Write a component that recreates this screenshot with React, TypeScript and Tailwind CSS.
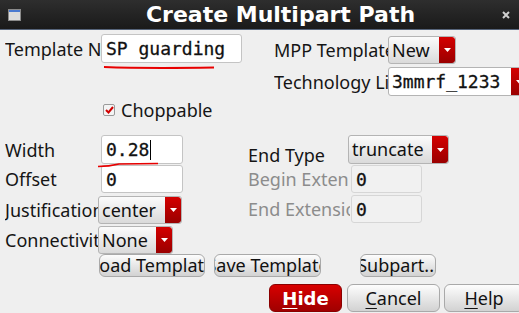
import React from 'react';

const sans = "font-['Noto_Sans','DejaVu_Sans',sans-serif]";
const mono = "font-['DejaVu_Sans_Mono','Liberation_Mono',monospace]";

const Arrow: React.FC = () => (
	<div className="flex h-full w-[16px] shrink-0 items-center justify-center rounded-r-[3px] bg-gradient-to-b from-[#d40000] to-[#9a0000]">
		<svg width="7" height="4" viewBox="0 0 7 4">
			<path d="M0 0 H7 L3.5 4 Z" fill="#fff" />
		</svg>
	</div>
);

const Dropdown: React.FC<{
	value: string;
	className: string;
	monoText?: boolean;
	white?: boolean;
}> = ({ value, className, monoText, white }) => (
	<div
		className={`flex shrink-0 overflow-hidden rounded-[3px] border border-[#b4b4b4] ${
			white ? 'bg-white' : 'bg-gradient-to-b from-[#fbfbfb] to-[#dadada]'
		} ${className}`}
	>
		<div
			className={`flex flex-1 items-center overflow-hidden whitespace-nowrap pl-[3px] text-[18px] text-[#111] ${
				monoText ? `${mono} [-webkit-text-stroke:0.3px_#111]` : sans
			}`}
		>
			{value}
		</div>
		<Arrow />
	</div>
);

const Field: React.FC<{ value: string; className: string; disabled?: boolean; cursor?: boolean }> = ({
	value,
	className,
	disabled,
	cursor,
}) => (
	<div
		className={`flex shrink-0 items-center rounded-[3px] border ${
			disabled ? 'border-[#d6d6d6] bg-[#f1f1f1]' : 'border-[#c4c4c4] bg-white'
		} pl-[4px] ${mono} text-[18px] text-[#111] [-webkit-text-stroke:0.3px_#111] ${className}`}
	>
		{value}
		{cursor && <span className="ml-[1px] inline-block h-[20px] w-[1px] bg-black" />}
	</div>
);

const Button: React.FC<{ className: string; children: React.ReactNode }> = ({ className, children }) => (
	<div
		className={`flex shrink-0 items-center justify-center overflow-hidden whitespace-nowrap rounded-[6px] border border-[#a9a9a9] bg-gradient-to-b from-[#fdfdfd] to-[#d2d2d2] ${sans} text-[18px] text-[#111] ${className}`}
	>
		{children}
	</div>
);

const Label: React.FC<{ text: string; className: string; gray?: boolean }> = ({ text, className, gray }) => (
	<div
		className={`shrink-0 overflow-hidden whitespace-nowrap ${sans} text-[18px] leading-[22px] ${
			gray ? 'text-[#8c8c8c]' : 'text-[#151515]'
		} ${className}`}
	>
		{text}
	</div>
);

export default function App() {
	return (
		<div className={`h-[313px] w-[519px] overflow-hidden bg-[#efefef] ${sans}`}>
			{/* title bar */}
			<div className="flex h-[30px] items-center border-b border-[#56647a] bg-gradient-to-b from-[#2e2e2e] to-[#1a1a1a]">
				<div className="ml-[8px] flex h-[12px] w-[13px] flex-col border border-[#8a8a8a] bg-[#dcdcdc]">
					<div className="h-[2px] bg-[#4a7ad0]" />
				</div>
				<div className="flex-1 pl-[38px] text-center font-['DejaVu_Sans',sans-serif] text-[22px] font-bold leading-[28px] text-white">
					Create Multipart Path
				</div>
				<svg className="mr-[9px]" width="8" height="8" viewBox="0 0 8 8">
					<path d="M1 1 L7 7 M7 1 L1 7" stroke="#d0d0d0" strokeWidth="2" />
				</svg>
			</div>

			{/* top section */}
			<div className="flex h-[105px]">
				<div className="w-[274px] shrink-0 pl-[5px]">
					<div className="mt-[4px] flex items-center">
						<Label text="Template Name" className="w-[96px]" />
						<Field value="SP guarding" className="h-[29px] w-[141px]" />
					</div>
					<svg className="ml-[98px] mt-[2px]" width="112" height="5" viewBox="0 0 112 5">
						<path d="M1 2 Q40 3.5 111 2.5" stroke="#e80000" strokeWidth="2" fill="none" />
					</svg>
					<div className="ml-[98px] mt-[28px] flex items-center">
						<div className="flex h-[12px] w-[12px] items-center justify-center rounded-[2px] border border-[#9a9a9a] bg-[#f4f4f4]">
							<svg width="9" height="8" viewBox="0 0 9 8">
								<path d="M1 4 L3.5 6.5 L8 1" stroke="#d00000" strokeWidth="2" fill="none" />
							</svg>
						</div>
						<Label text="Choppable" className="ml-[6px] leading-[24px]" />
					</div>
				</div>
				<div className="min-w-0 flex-1">
					<div className="mt-[6px] flex items-center">
						<Label text="MPP Template" className="w-[114px]" />
						<Dropdown value="New" className="h-[28px] w-[68px]" />
					</div>
					<div className="mt-[3px] flex items-center">
						<Label text="Technology Library" className="w-[114px]" />
						<Dropdown value="3mmrf_1233" monoText white className="h-[29px] w-[140px]" />
					</div>
				</div>
			</div>

			{/* middle rows */}
			<div className="pl-[5px]">
				<div className="flex h-[30px] items-start">
					<Label text="Width" className="mt-[4px] w-[96px]" />
					<div className="relative">
						<Field value="0.28" cursor className="h-[29px] w-[82px]" />
						<svg className="absolute left-[-4px] top-[27px]" width="62" height="6" viewBox="0 0 62 6">
							<path d="M1 4.5 Q12 4.5 22 2 L61 1.5" stroke="#e80000" strokeWidth="1.6" fill="none" />
						</svg>
					</div>
					<Label text="End Type" className="ml-[65px] mt-[9px] w-[100px]" />
					<Dropdown value="truncate" className="h-[29px] w-[101px]" />
				</div>
				<div className="flex h-[30px] items-start">
					<Label text="Offset" className="mt-[3px] w-[96px]" />
					<Field value="0" className="h-[28px] w-[82px]" />
					<Label text="Begin Extension" gray className="ml-[65px] mt-[3px] w-[101px]" />
					<Field value="0" disabled className="ml-[2px] h-[28px] w-[71px]" />
				</div>
				<div className="flex h-[31px] items-start">
					<Label text="Justification" className="mt-[4px] w-[93px]" />
					<Dropdown value="center" className="mt-[1px] h-[28px] w-[84px]" />
					<Label text="End Extension" gray className="ml-[66px] mt-[3px] w-[102px]" />
					<Field value="0" disabled className="ml-[1px] h-[28px] w-[71px]" />
				</div>
				<div className="flex h-[28px] items-start">
					<Label text="Connectivity" className="mt-[3px] w-[93px]" />
					<Dropdown value="None" className="h-[28px] w-[75px]" />
				</div>
			</div>

			{/* template buttons */}
			<div className="flex h-[23px] pl-[99px]">
				<Button className="h-[23px] w-[106px] text-[17px]">Load Template</Button>
				<Button className="ml-[9px] h-[23px] w-[107px] text-[17px]">Save Template</Button>
				<Button className="ml-[39px] h-[23px] w-[76px] text-[17px]">Subpart...</Button>
			</div>

			{/* bottom buttons */}
			<div className="mt-[7px] flex h-[28px] pl-[269px]">
				<div className="flex h-[28px] w-[73px] shrink-0 items-center justify-center rounded-[6px] border border-[#8a0000] bg-gradient-to-b from-[#d80000] to-[#a00000] font-['DejaVu_Sans',sans-serif] text-[18px] font-bold text-white">
					<span className="underline decoration-1 underline-offset-[3px]">H</span>ide
				</div>
				<Button className="ml-[5px] h-[28px] w-[93px]">
					<span className="underline decoration-1 underline-offset-[3px]">C</span>ancel
				</Button>
				<Button className="ml-[4px] h-[28px] w-[80px]">
					<span className="underline decoration-1 underline-offset-[3px]">H</span>elp
				</Button>
			</div>
		</div>
	);
}
